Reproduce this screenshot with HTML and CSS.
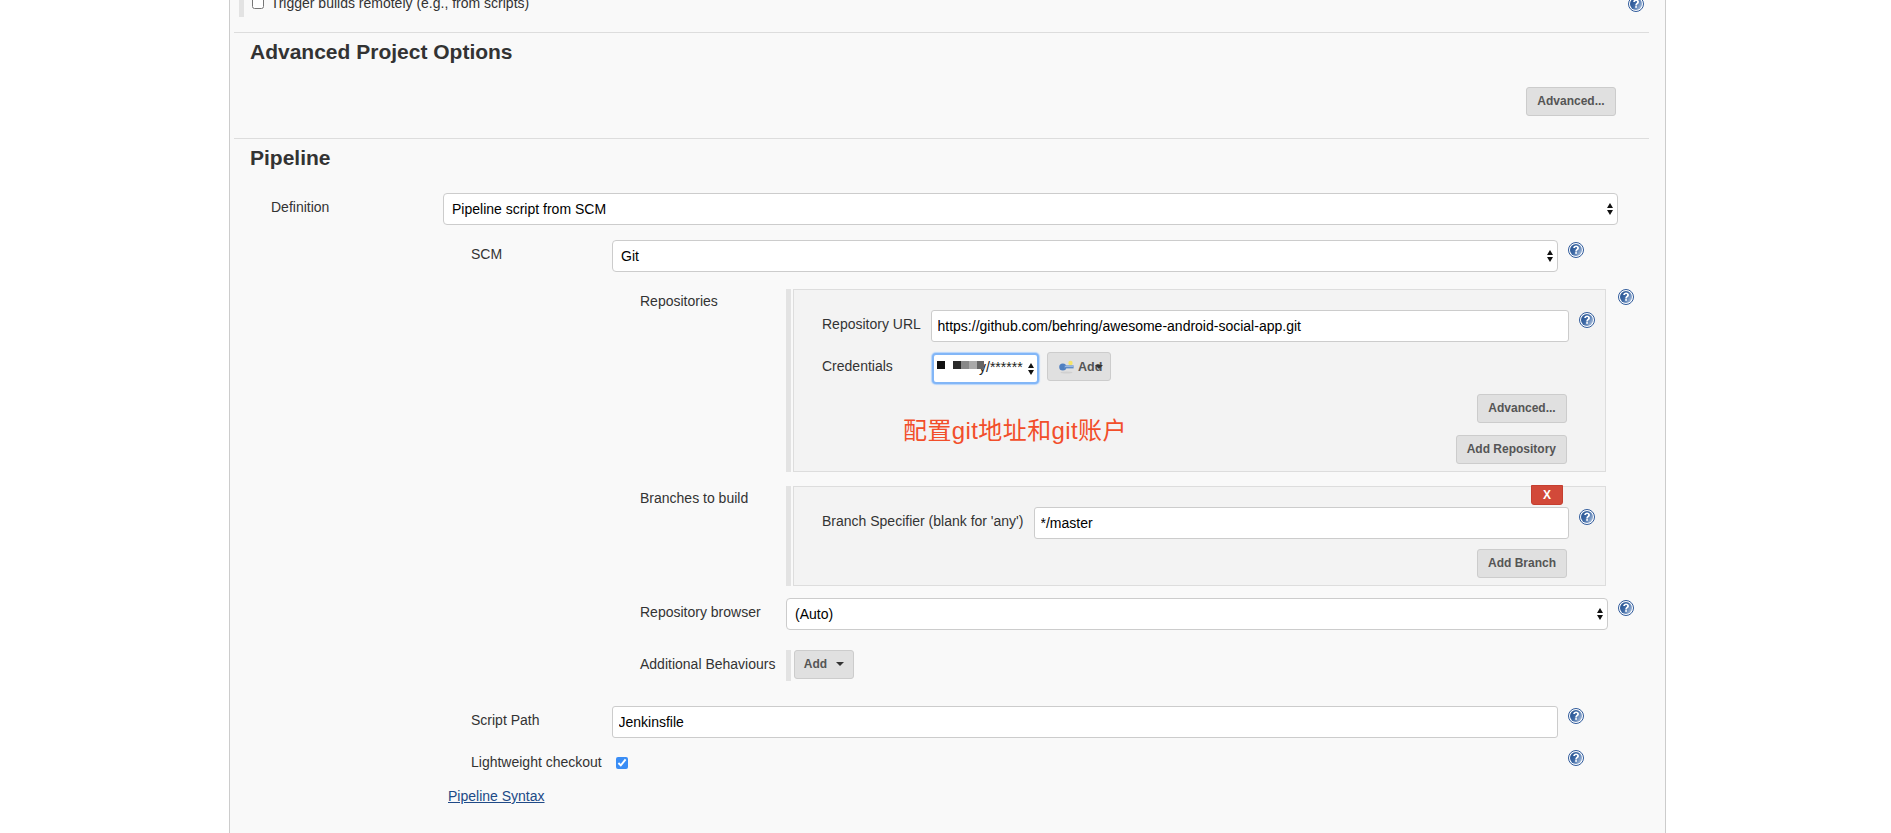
FILE: index.html
```html
<!DOCTYPE html>
<html>
<head>
  <title>Pipeline configuration</title>
  <link rel="stylesheet" href="styles.css">
</head>
<body>

  <svg class="defs" width="0" height="0">
    <defs>
      <linearGradient id="helpFill" x1="0" y1="0" x2="1" y2="0.6">
        <stop offset="0" stop-color="#24508f"/>
        <stop offset="0.55" stop-color="#3f6aa6"/>
        <stop offset="1" stop-color="#9db5d6"/>
      </linearGradient>
      <symbol id="help" viewBox="0 0 16 16">
        <circle cx="8" cy="8" r="7.5" fill="#fff" stroke="#2f5a9b" stroke-width="1"/>
        <circle cx="8" cy="8" r="6" fill="url(#helpFill)"/>
        <path d="M5.2 6c0-1.6 1.3-2.6 2.9-2.6S11 4.400 11 5.900c0 2-2.100 2-2.100 3.500H7.200c0-2.300 1.900-2.400 1.900-3.500 0-.6-.4-1-1-1s-1.100.4-1.100 1.100z" fill="#fff"/>
        <rect x="7.200" y="10.100" width="1.700" height="1.700" fill="#fff"/>
      </symbol>
    </defs>
  </svg>

  <div class="panel">

    <div class="trigger">
      <label class="check-label"><input type="checkbox"> Trigger builds remotely (e.g., from scripts)</label>
      <svg class="help"><use href="#help"/></svg>
    </div>

    <div class="section section-advanced">
      <h2>Advanced Project Options</h2>
      <div class="btn-line"><button class="btn btn-wide">Advanced...</button></div>
    </div>

    <div class="section section-pipeline">
      <h2>Pipeline</h2>

      <div class="row row-def">
        <div class="lbl">Definition</div>
        <div class="select"><select><option>Pipeline script from SCM</option></select></div>
      </div>

      <div class="row row-scm gap-scm">
        <div class="lbl">SCM</div>
        <div class="select"><select><option>Git</option></select></div>
        <svg class="help"><use href="#help"/></svg>
      </div>

      <div class="row row-repo gap-repos">
        <div class="lbl lbl-box">Repositories</div>
        <div class="box box-repos">
          <div class="inner-row">
            <div class="lbl">Repository URL</div>
            <input class="text" type="text" value="https://github.com/behring/awesome-android-social-app.git">
            <svg class="help"><use href="#help"/></svg>
          </div>
          <div class="inner-row cred-row">
            <div class="lbl">Credentials</div>
            <div class="cred-line">
              <div class="cred">
                <span class="cred-text">y/******</span>
                <span class="blur blur-a"></span>
                <span class="blur blur-b"></span>
                <span class="blur blur-c"></span>
                <span class="blur blur-d"></span>
                <span class="blur blur-e"></span>
              </div>
              <button class="btn btn-key">
                <svg class="key" width="15" height="14" viewBox="0 0 15 14">
                  <ellipse cx="7.5" cy="12.5" rx="6" ry="1" fill="#d0d0d0"/>
                  <circle cx="11.5" cy="3" r="2.2" fill="#f6e468"/>
                  <circle cx="3.8" cy="7" r="3.6" fill="#4f7fc0"/>
                  <rect x="5" y="5.4" width="9.6" height="3" fill="#5f8cc8"/>
                  <rect x="6" y="5.800" width="8.400" height="1" fill="#a9c4e6"/>
                </svg>
                Add<span class="caret caret-over"></span>
              </button>
            </div>
          </div>
          <div class="btn-line btn-line-adv"><button class="btn btn-wide">Advanced...</button></div>
          <div class="btn-line btn-line-addrepo"><button class="btn">Add Repository</button></div>
          <div class="note">配置git地址和git账户</div>
        </div>
        <svg class="help"><use href="#help"/></svg>
      </div>

      <div class="row row-repo gap-branch">
        <div class="lbl lbl-box">Branches to build</div>
        <div class="box box-branch">
          <button class="btn-x">X</button>
          <div class="inner-row inner-branch">
            <div class="lbl">Branch Specifier (blank for 'any')</div>
            <input class="text" type="text" value="*/master">
            <svg class="help"><use href="#help"/></svg>
          </div>
          <div class="btn-line btn-line-branch"><button class="btn btn-wide">Add Branch</button></div>
        </div>
      </div>

      <div class="row row-browser gap-browser">
        <div class="lbl">Repository browser</div>
        <div class="select"><select><option>(Auto)</option></select></div>
        <svg class="help"><use href="#help"/></svg>
      </div>

      <div class="row row-repo gap-behaviours">
        <div class="lbl lbl-behaviours">Additional Behaviours</div>
        <div class="behaviours"><button class="btn btn-add">Add<span class="caret"></span></button></div>
      </div>

      <div class="row row-scm gap-script">
        <div class="lbl">Script Path</div>
        <input class="text" type="text" value="Jenkinsfile">
        <svg class="help"><use href="#help"/></svg>
      </div>

      <div class="row row-scm gap-light">
        <div class="lbl lbl-light">Lightweight checkout</div>
        <div class="light-check"><input type="checkbox" checked></div>
        <svg class="help"><use href="#help"/></svg>
      </div>

      <a class="syntax" href="#">Pipeline Syntax</a>
    </div>
  </div>

</body>
</html>
```

FILE: styles.css
```css
html, body { height: 100%; }
body {
  margin: 0;
  background: #fff;
  font-family: "Liberation Sans", Arial, sans-serif;
  font-size: 14px;
  color: #333;
  overflow: hidden;
}
.defs { position: absolute; }
.panel {
  margin: -8px 0 0 229px;
  width: 1435px;
  height: 900px;
  background: #f9f9f9;
  border-left: 1px solid #ccc;
  border-right: 1px solid #ccc;
}
.help { display: block; width: 16px; height: 16px; margin-top: 2px; margin-left: 10px; }

.trigger {
  display: flex;
  justify-content: space-between;
  height: 25px;
  margin-left: 9px;
  padding-left: 8px;
  border-left: 5px solid #e3e3e3;
  width: 1405px;
  box-sizing: border-box;
}
.trigger .help { margin-top: 4px; }
.check-label { display: block; padding-top: 3px; }
.check-label input { margin: 0 3px 0 0; width: 12px; height: 12px; vertical-align: -1px; }

.section { margin: 0 16px 0 4px; border-top: 1px solid #ddd; position: relative; }
.section h2 { margin: 0; padding-left: 16px; font-size: 21px; line-height: 24px; color: #333; }
.section-advanced { margin-top: 15px; height: 106px; padding-top: 7px; box-sizing: border-box; }
.section-pipeline { padding-top: 7px; }

.btn-line { display: flex; justify-content: flex-end; }
.section-advanced .btn-line { margin: 23px 33px 0 0; }
.btn {
  height: 29px;
  padding: 0 10px 2px;
  background: #e0e0e0;
  border: 1px solid #ccc;
  border-radius: 3px;
  font-family: inherit;
  font-size: 12px;
  font-weight: bold;
  color: #555;
}
.btn-wide { width: 90px; padding: 0 0 2px; }

/* form rows, one grid per indent level */
.row { display: grid; }
.lbl { padding-top: 6px; line-height: 16px; }
.row-def { grid-template-columns: 172px 1175px; margin: 23px 0 0 37px; }
.row-scm { grid-template-columns: 141px 946px 26px; margin-left: 237px; }
.row-repo { grid-template-columns: 146px 820px 28px; margin-left: 406px; }
.row-browser { grid-template-columns: 146px 822px 26px; margin-left: 406px; }
.gap-scm { margin-top: 15px; }
.gap-repos { margin-top: 17px; }
.gap-branch { margin-top: 14px; }
.gap-browser { margin-top: 12px; }
.gap-behaviours { margin-top: 20px; }
.gap-script { margin-top: 25px; }
.gap-light { margin-top: 12px; height: 20px; }
.lbl-box { padding-top: 4px; }
.row-repo > .help { margin-top: 0; margin-left: 12px; }

.select { position: relative; height: 32px; }
.select select {
  appearance: none;
  display: block;
  width: 100%;
  height: 32px;
  padding: 0 20px 1px 8px;
  background: #fff;
  border: 1px solid #ccc;
  border-radius: 4px;
  font-family: inherit;
  font-size: 14px;
  color: #000;
}
.select::before, .select::after {
  content: "";
  position: absolute;
  right: 5px;
  border-left: 3.5px solid transparent;
  border-right: 3.5px solid transparent;
}
.select::before { top: 10px; border-bottom: 5px solid #111; }
.select::after { top: 17px; border-top: 5px solid #111; }

.text {
  display: block;
  width: 100%;
  height: 32px;
  padding: 0 5.5px;
  box-sizing: border-box;
  background: #fff;
  border: 1px solid #ccc;
  border-radius: 3px;
  font-family: inherit;
  font-size: 14px;
  color: #000;
  outline: none;
}

.box {
  position: relative;
  box-sizing: border-box;
  margin-left: 7px;
  background: #f3f3f3;
  border: 1px solid #ddd;
  padding: 20px 10px 0 28px;
}
.box::before {
  content: "";
  position: absolute;
  left: -8px;
  top: -1px;
  bottom: -1px;
  width: 5px;
  background: #e3e3e3;
}
.box-repos { height: 183px; }
.box-branch { height: 100px; }

.inner-row { display: grid; grid-template-columns: 109px 638px 26px; }
.inner-branch { grid-template-columns: 212px 535px 26px; }
.cred-row { margin-top: 10px; }
.cred-line { display: flex; gap: 7px; }

.cred {
  position: relative;
  box-sizing: border-box;
  width: 107px;
  height: 31px;
  margin: 1px;
  background: #fff;
  border: 2px solid #82b6f7;
  border-radius: 4px;
  box-shadow: 0 0 1px 1px #b5d4fb;
}
.cred::before, .cred::after {
  content: "";
  position: absolute;
  right: 3px;
  border-left: 3.5px solid transparent;
  border-right: 3.5px solid transparent;
}
.cred::before { top: 8px; border-bottom: 5px solid #111; }
.cred::after { top: 15px; border-top: 5px solid #111; }
.blur { position: absolute; top: 6px; height: 8px; background: #fff; }
.blur-a { left: 3px; width: 8px; background: #111; }
.blur-b { left: 19px; width: 8px; background: #2a2a2a; }
.blur-c { left: 27px; width: 8px; background: #888; }
.blur-d { left: 35px; width: 8px; background: #aaa; }
.blur-e { left: 43px; width: 7px; background: #666; }
.cred-text { position: absolute; left: 45px; top: 4px; font-size: 14px; line-height: 16px; color: #222; }

.btn-key { display: flex; align-items: center; width: 64px; padding: 0 0 0 11px; position: relative; font-size: 12.5px; }
.key { margin-right: 4px; }
.caret {
  display: inline-block;
  margin-left: 9px;
  vertical-align: 2px;
  border-left: 4px solid transparent;
  border-right: 4px solid transparent;
  border-top: 4px solid #333;
}
.caret-over { position: absolute; left: 47px; top: 12px; margin: 0; }

.btn-line-adv { margin: 9px 28px 0 0; }
.btn-line-addrepo { margin: 12px 28px 0 0; }
.btn-line-branch { margin: 10px 28px 0 0; }

.note {
  position: absolute;
  left: 109px;
  top: 125px;
  font-family: "Liberation Sans", "Noto Sans CJK SC", sans-serif;
  font-size: 24px;
  line-height: 32px;
  letter-spacing: 0.4px;
  color: #f24e2a;
}

.btn-x {
  position: absolute;
  right: 42px;
  top: -2px;
  width: 32px;
  height: 20px;
  padding: 0;
  background: #d24939;
  border: 1px solid #c53f30;
  border-radius: 0 0 3px 3px;
  font-family: inherit;
  font-size: 12px;
  font-weight: bold;
  color: #fff;
}

.lbl-behaviours { padding-top: 6px; }
.behaviours {
  height: 31px;
  padding-left: 3px;
  border-left: 5px solid #e3e3e3;
}
.btn-add { width: 60px; padding: 0 0 2px; }

.lbl-light { padding-top: 4px; }
.light-check { padding: 7px 0 0 4px; }
.light-check input { display: block; margin: 0; width: 12px; height: 12px; accent-color: #3a8df5; }
.gap-light .help { margin-top: 0; }

.syntax {
  display: inline-block;
  margin: 18px 0 0 214px;
  line-height: 16px;
  color: #204a87;
}
```
